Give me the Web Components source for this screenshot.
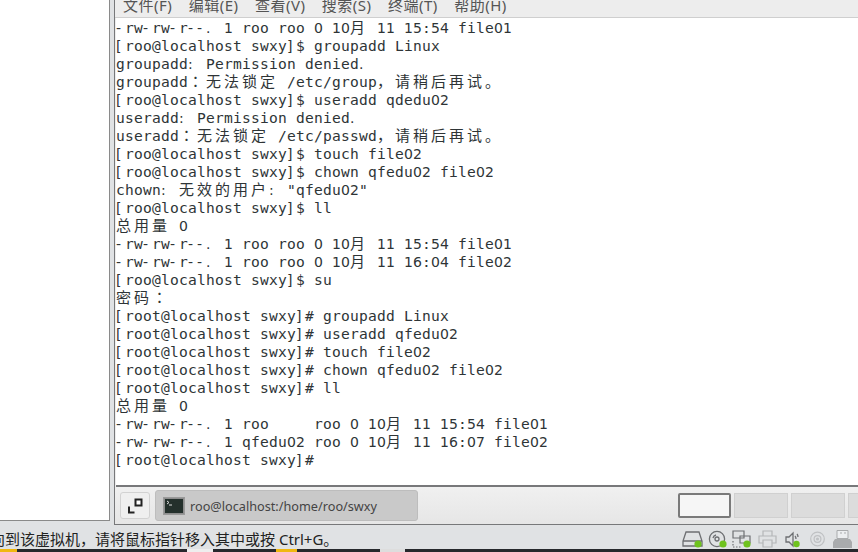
<!DOCTYPE html>
<html>
<head>
<meta charset="utf-8">
<style>
  html, body { margin: 0; height: 100%; overflow: hidden; background: #e0e2e4; }
</style>
</head>
<body>
<vm-screen>
  <term-line>-rw-rw-r--. 1 roo roo 0 10<term-cjk>月</term-cjk> 11 15:54 file01</term-line>
  <term-line>[roo@localhost swxy]$ groupadd Linux</term-line>
  <term-line>groupadd: Permission denied.</term-line>
  <term-line>groupadd<term-cjk tc>：</term-cjk><term-cjk>无法锁定</term-cjk> /etc/group<term-cjk>，请稍后再试。</term-cjk></term-line>
  <term-line>[roo@localhost swxy]$ useradd qdedu02</term-line>
  <term-line>useradd: Permission denied.</term-line>
  <term-line>useradd<term-cjk tc>：</term-cjk><term-cjk>无法锁定</term-cjk> /etc/passwd<term-cjk>，请稍后再试。</term-cjk></term-line>
  <term-line>[roo@localhost swxy]$ touch file02</term-line>
  <term-line>[roo@localhost swxy]$ chown qfedu02 file02</term-line>
  <term-line>chown: <term-cjk>无效的用户</term-cjk>: "qfedu02"</term-line>
  <term-line>[roo@localhost swxy]$ ll</term-line>
  <term-line><term-cjk>总用量</term-cjk> 0</term-line>
  <term-line>-rw-rw-r--. 1 roo roo 0 10<term-cjk>月</term-cjk> 11 15:54 file01</term-line>
  <term-line>-rw-rw-r--. 1 roo roo 0 10<term-cjk>月</term-cjk> 11 16:04 file02</term-line>
  <term-line>[roo@localhost swxy]$ su</term-line>
  <term-line><term-cjk>密码</term-cjk><term-cjk tc>：</term-cjk></term-line>
  <term-line>[root@localhost swxy]# groupadd Linux</term-line>
  <term-line>[root@localhost swxy]# useradd qfedu02</term-line>
  <term-line>[root@localhost swxy]# touch file02</term-line>
  <term-line>[root@localhost swxy]# chown qfedu02 file02</term-line>
  <term-line>[root@localhost swxy]# ll</term-line>
  <term-line><term-cjk>总用量</term-cjk> 0</term-line>
  <term-line>-rw-rw-r--. 1 roo     roo 0 10<term-cjk>月</term-cjk> 11 15:54 file01</term-line>
  <term-line>-rw-rw-r--. 1 qfedu02 roo 0 10<term-cjk>月</term-cjk> 11 16:07 file02</term-line>
  <term-line>[root@localhost swxy]# </term-line>
</vm-screen>
<script>
// no whitespace around the slot: the line is white-space: pre
class TermLine extends HTMLElement {
  constructor() {
    super();
    this.attachShadow({ mode: 'open' });
    this.shadowRoot.innerHTML = `<style>
        :host {
          display: block;
          height: 18px;
          line-height: 18px;
          white-space: pre;
          font-family: 'DejaVu Sans Mono', 'Noto Sans CJK SC', monospace;
          font-size: 14.6px;
          letter-spacing: .21px;
          color: #2e3436;
        }
      </style><slot></slot>`;
  }

  connectedCallback() {
    // the terminal draws digits and - [ ] . left in their cell, with a plain zero
    [...this.childNodes].filter((n) => n.nodeType === 3).forEach((node) => {
      const parts = node.data.split(/([-\[\].0-9]|:(?= ))/);
      const frag = document.createDocumentFragment();
      parts.forEach((part, i) => {
        if (i % 2) {
          const cell = document.createElement('term-cell');
          cell.textContent = part;
          frag.append(cell);
        } else if (part) {
          frag.append(part);
        }
      });
      node.replaceWith(frag);
    });
  }
}

class TermCell extends HTMLElement {
  constructor() {
    super();
    this.attachShadow({ mode: 'open' });
    this.shadowRoot.innerHTML = `<style>
        :host {
          display: inline-block;
          width: 9px;
          font-family: 'DejaVu Sans', sans-serif;
          font-size: 14px;
          letter-spacing: 0;
        }
      </style><slot></slot>`;
  }
}

// wide characters in the terminal grid, two cells of 9px each
class TermCjk extends HTMLElement {
  constructor() {
    super();
    this.attachShadow({ mode: 'open' });
    this.shadowRoot.innerHTML = `<style>
        :host {
          font-family: 'Noto Sans CJK SC', sans-serif;
          font-size: 15px;
          letter-spacing: 3px;
          line-height: 1;
        }
        :host([tc]) {
          font-family: 'Noto Sans CJK TC', sans-serif;
        }
      </style><slot></slot>`;
  }
}

class TrayIcons extends HTMLElement {
  constructor() {
    super();
    this.attachShadow({ mode: 'open' });
    this.shadowRoot.innerHTML = `
      <style>
        :host {
          display: flex;
          align-items: center;
          gap: 5px;
          flex: none;
        }
        svg { display: block; flex: none; }
      </style>
      <svg width="21" height="18" viewBox="0 0 21 18" fill="none" stroke="#6d6f72" stroke-width="1.3">
        <path d="M4 2h13l3 9v5H1v-5z M1 11h19"/>
        <circle cx="16" cy="14" r="3.6" fill="#6fc21e" stroke="none"/>
      </svg>
      <svg width="19" height="18" viewBox="0 0 19 18" fill="none" stroke="#6d6f72" stroke-width="1.3">
        <circle cx="9" cy="9" r="7.6"/><circle cx="9" cy="9" r="2"/><path d="M5 8a4 4 0 0 1 3-3"/>
        <circle cx="15" cy="14" r="3.6" fill="#6fc21e" stroke="none"/>
      </svg>
      <svg width="19" height="18" viewBox="0 0 19 18" fill="none" stroke="#6d6f72" stroke-width="1.2">
        <path d="M1 1h11v7H1z M8 6h10v7H8z"/><path d="M1 11v6h8" stroke-dasharray="1.5 1.5"/>
        <circle cx="15" cy="14" r="3.6" fill="#6fc21e" stroke="none"/>
      </svg>
      <svg width="19" height="18" viewBox="0 0 19 18" fill="none" stroke="#b4b6b8" stroke-width="1.2" style="margin-left:2px">
        <path d="M5 6V1h9v5 M5 13H1V6h17v7h-4 M5 10h9v7H5z"/>
      </svg>
      <svg width="15" height="18" viewBox="0 0 15 18" fill="none" stroke="#6d6f72" stroke-width="1.3" style="margin-left:3px">
        <path d="M1 7h3l4-4v13l-4-4H1z M10 6c1 1 1 2 1 3 M12 4c1 1 1 2 1 3"/>
        <circle cx="11.500" cy="14" r="3.2" fill="#6fc21e" stroke="none"/>
      </svg>
      <svg width="15" height="18" viewBox="0 0 15 18" fill="none" stroke="#bfc1c3" stroke-width="1.2" style="margin-left:5px">
        <circle cx="7.500" cy="9" r="6.800"/><circle cx="7.500" cy="9" r="3.400"/><circle cx="7.500" cy="9" r=".9" fill="#bfc1c3"/>
      </svg>
      <svg width="19" height="18" viewBox="0 0 19 18" style="margin-left:3px">
        <path d="M4 .5h11v8H4z" fill="#eceef0" stroke="#a9abad"/>
        <path d="M7 3h2M11 3h2" stroke="#a9abad"/>
        <path d="M2 9h15l2 3v6H0v-6z" fill="#a9abad"/>
      </svg>`;
  }
}

class VmScreen extends HTMLElement {
  constructor() {
    super();
    this.attachShadow({ mode: 'open' });
    this.shadowRoot.innerHTML = `
      <style>
        :host {
          display: grid;
          grid-template-rows: 525px 27px;
          grid-template-columns: minmax(0, 1fr);
          height: 552px;
          overflow: hidden;
          font-family: 'Noto Sans', 'Noto Sans CJK SC', sans-serif;
          color: #2e3436;
        }
        .top { display: flex; min-height: 0; }
        .side {
          width: 110px;
          box-sizing: border-box;
          background: #fff;
          border-right: 1px solid #8a8a8a;
          border-bottom: 1px solid #8a8a8a;
          margin-bottom: 4px;
          flex: none;
        }
        .desk {
          flex: 1;
          margin-left: 4px;
          border-left: 1px solid #77787a;
          border-bottom: 1px solid #77787a;
          display: flex;
          flex-direction: column;
          min-width: 0;
          background: #ededed;
        }
        .menu {
          height: 18px;
          box-sizing: border-box;
          flex: none;
          border-bottom: 1px solid #cfcfcf;
          display: flex;
          gap: 16.4px;
          padding-left: 8px;
          font-size: 15px;
          letter-spacing: .5px;
          line-height: 11px;
          overflow: hidden;
          color: #555;
          white-space: nowrap;
        }
        .term {
          flex: 1;
          background: #fff;
          margin-left: 1px;
          padding-top: 1px;
          border-bottom: 2px solid #77787a;
          overflow: hidden;
          min-height: 0;
        }
        .bar {
          height: 37px;
          flex: none;
          display: flex;
          align-items: center;
          padding-left: 5px;
          background: linear-gradient(#f0f0f0, #e6e6e6);
          overflow: hidden;
        }
        .show {
          width: 30px;
          height: 27px;
          box-sizing: border-box;
          border: 1px solid #d2d2d2;
          border-radius: 3px;
          background: #efefef;
          display: flex;
          align-items: center;
          justify-content: center;
          flex: none;
        }
        .task {
          width: 263px;
          height: 31px;
          box-sizing: border-box;
          margin-left: 5px;
          border-radius: 3px;
          background: #c9c9c9;
          border: 1px solid #bdbdbd;
          display: flex;
          align-items: center;
          gap: 5px;
          padding-left: 7px;
          font-size: 12.7px;
          flex: none;
          color: #444;
        }
        .icon { width: 22px; height: 18px; flex: none; }
        .pages { margin-left: 260px; display: flex; gap: 3px; flex: none; }
        .page {
          width: 54px;
          height: 25px;
          box-sizing: border-box;
          background: #dcdcdc;
          border: 1px solid #d0d0d0;
          flex: none;
        }
        .page.on { background: #f6f6f6; border: 2px solid #7a7a7a; border-radius: 2px; width: 53px; }
        .status {
          background: #e0e2e4;
          display: flex;
          align-items: center;
          box-sizing: border-box;
          height: 24px;
          padding-top: 3px;
          font-size: 15px;
          white-space: nowrap;
          overflow: hidden;
          color: #222;
        }
        .msg { margin-left: -10px; flex: none; }
        .tray { margin-left: auto; padding-right: 6px; display: flex; flex: none; }
        .strip {
          height: 3px;
          background: linear-gradient(90deg, #f0b810 17px, #26282c 17px, #26282c 187px, #eee 187px, #eee 213px, #26282c 213px, #26282c 276px, #f0b810 276px, #f0b810 297px, #26282c 297px, #26282c 380px, #ddd 380px, #ddd 405px, #26282c 405px);
        }
      </style>
      <div class="top">
        <div class="side"></div>
        <div class="desk">
          <div class="menu"><span>文件(F)</span><span>编辑(E)</span><span>查看(V)</span><span>搜索(S)</span><span>终端(T)</span><span>帮助(H)</span></div>
          <div class="term"><slot></slot></div>
          <div class="bar">
            <div class="show">
              <svg width="16" height="16" viewBox="0 0 16 16"><path d="M8.5 1.5h6v6h-6z" fill="#fff" stroke="#222" stroke-width="2"/><path d="M2 8.500v6h5.500" fill="none" stroke="#222" stroke-width="2"/></svg>
            </div>
            <div class="task">
              <svg class="icon" viewBox="0 0 22 18"><rect x=".5" y=".5" width="21" height="17" fill="#8d8d8d" stroke="#9a9a9a"/><rect x="2" y="2" width="18" height="14" fill="#24302c"/><path d="M4 4l2 1.500L4 7" fill="none" stroke="#ddd"/><path d="M6 8h3" stroke="#ddd"/></svg>
              <span>roo@localhost:/home/roo/swxy</span>
            </div>
            <div class="pages"><div class="page on"></div><div class="page"></div><div class="page"></div><div class="page"></div></div>
          </div>
        </div>
      </div>
      <div>
        <div class="status">
          <span class="msg">向到该虚拟机，请将鼠标指针移入其中或按 Ctrl+G。</span>
          <span class="tray"><tray-icons></tray-icons></span>
        </div>
        <div class="strip"></div>
      </div>`;
  }
}

customElements.define('term-cell', TermCell);
customElements.define('term-line', TermLine);
customElements.define('term-cjk', TermCjk);
customElements.define('tray-icons', TrayIcons);
customElements.define('vm-screen', VmScreen);
</script>
</body>
</html>
